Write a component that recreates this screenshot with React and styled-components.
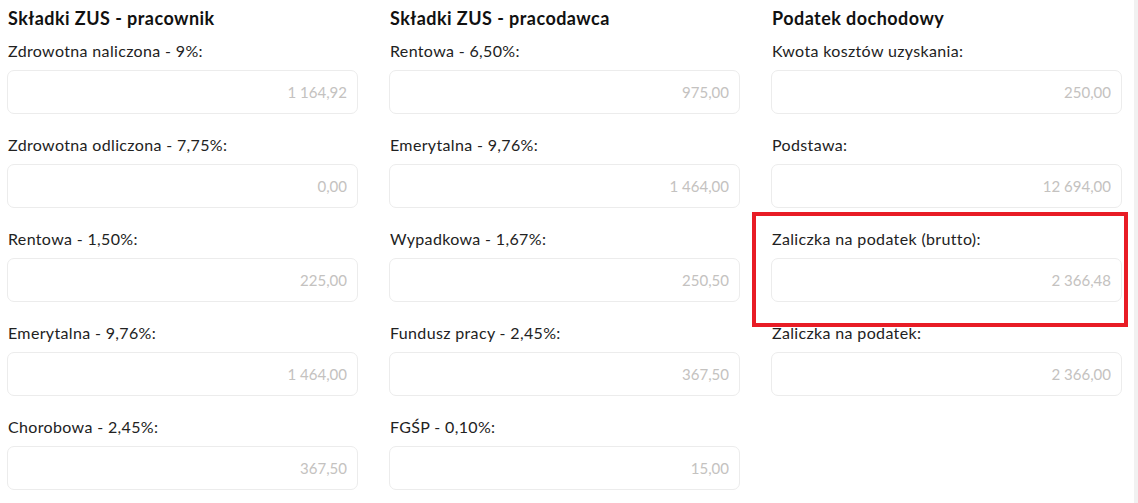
import React from "react";
import styled, { createGlobalStyle } from "styled-components";

const GlobalStyle = createGlobalStyle`
  html, body {
    margin: 0;
    padding: 0;
    background: #ffffff;
  }
  body {
    font-family: "Lato", "Noto Sans", sans-serif;
    color: #1a1a1a;
  }
`;

const SECTIONS = [
  {
    title: "Składki ZUS - pracownik",
    fields: [
      { label: "Zdrowotna naliczona - 9%:", value: "1 164,92" },
      { label: "Zdrowotna odliczona - 7,75%:", value: "0,00" },
      { label: "Rentowa - 1,50%:", value: "225,00" },
      { label: "Emerytalna - 9,76%:", value: "1 464,00" },
      { label: "Chorobowa - 2,45%:", value: "367,50" },
    ],
  },
  {
    title: "Składki ZUS - pracodawca",
    fields: [
      { label: "Rentowa - 6,50%:", value: "975,00" },
      { label: "Emerytalna - 9,76%:", value: "1 464,00" },
      { label: "Wypadkowa - 1,67%:", value: "250,50" },
      { label: "Fundusz pracy - 2,45%:", value: "367,50" },
      { label: "FGŚP - 0,10%:", value: "15,00" },
    ],
  },
  {
    title: "Podatek dochodowy",
    fields: [
      { label: "Kwota kosztów uzyskania:", value: "250,00" },
      { label: "Podstawa:", value: "12 694,00" },
      { label: "Zaliczka na podatek (brutto):", value: "2 366,48", marked: true },
      { label: "Zaliczka na podatek:", value: "2 366,00" },
    ],
  },
];

const App = () => {
  return (
    <Page>
      <GlobalStyle />
      <Content>
        {SECTIONS.map((section) => (
          <Column key={section.title}>
            <Heading>{section.title}</Heading>
            {section.fields.map((field) => (
              <Field key={field.label} $marked={field.marked}>
                <Label>{field.label}</Label>
                <ValueInput type="text" value={field.value} readOnly />
              </Field>
            ))}
          </Column>
        ))}
      </Content>
      <Track />
    </Page>
  );
};

const Page = styled.div`
  display: flex;
  min-height: 100vh;
`;

const Content = styled.div`
  flex: 1;
  display: grid;
  grid-template-columns: repeat(3, 351px);
  column-gap: 31px;
  align-content: start;
  padding-left: 7px;
`;

const Column = styled.section`
  display: flex;
  flex-direction: column;
  gap: 21px;
  padding-top: 6px;
`;

const Heading = styled.h2`
  margin: 0 0 -10px 1px;
  font-size: 18px;
  line-height: 24px;
  font-weight: 700;
  letter-spacing: 0.45px;
  color: #111;
`;

const Field = styled.div`
  position: relative;
  display: flex;
  flex-direction: column;
  gap: 9px;

  &::after {
    content: "";
    display: ${(p) => (p.$marked ? "block" : "none")};
    position: absolute;
    top: -17px;
    left: -19px;
    right: -6px;
    bottom: -25px;
    border: 4px solid #e81c25;
    pointer-events: none;
  }
`;

const Label = styled.label`
  padding-left: 1px;
  font-size: 16px;
  line-height: 20px;
  letter-spacing: 0.35px;
  color: #222;
`;

const ValueInput = styled.input`
  box-sizing: border-box;
  width: 100%;
  height: 44px;
  padding: 0 10px;
  border: 1px solid #ececec;
  border-radius: 7px;
  background: #fff;
  font-family: inherit;
  font-size: 15px;
  color: #c4c2c0;
  text-align: right;
  outline: none;
`;

const Track = styled.div`
  width: 4px;
  background: #f1f1f1;
`;

export default App;
